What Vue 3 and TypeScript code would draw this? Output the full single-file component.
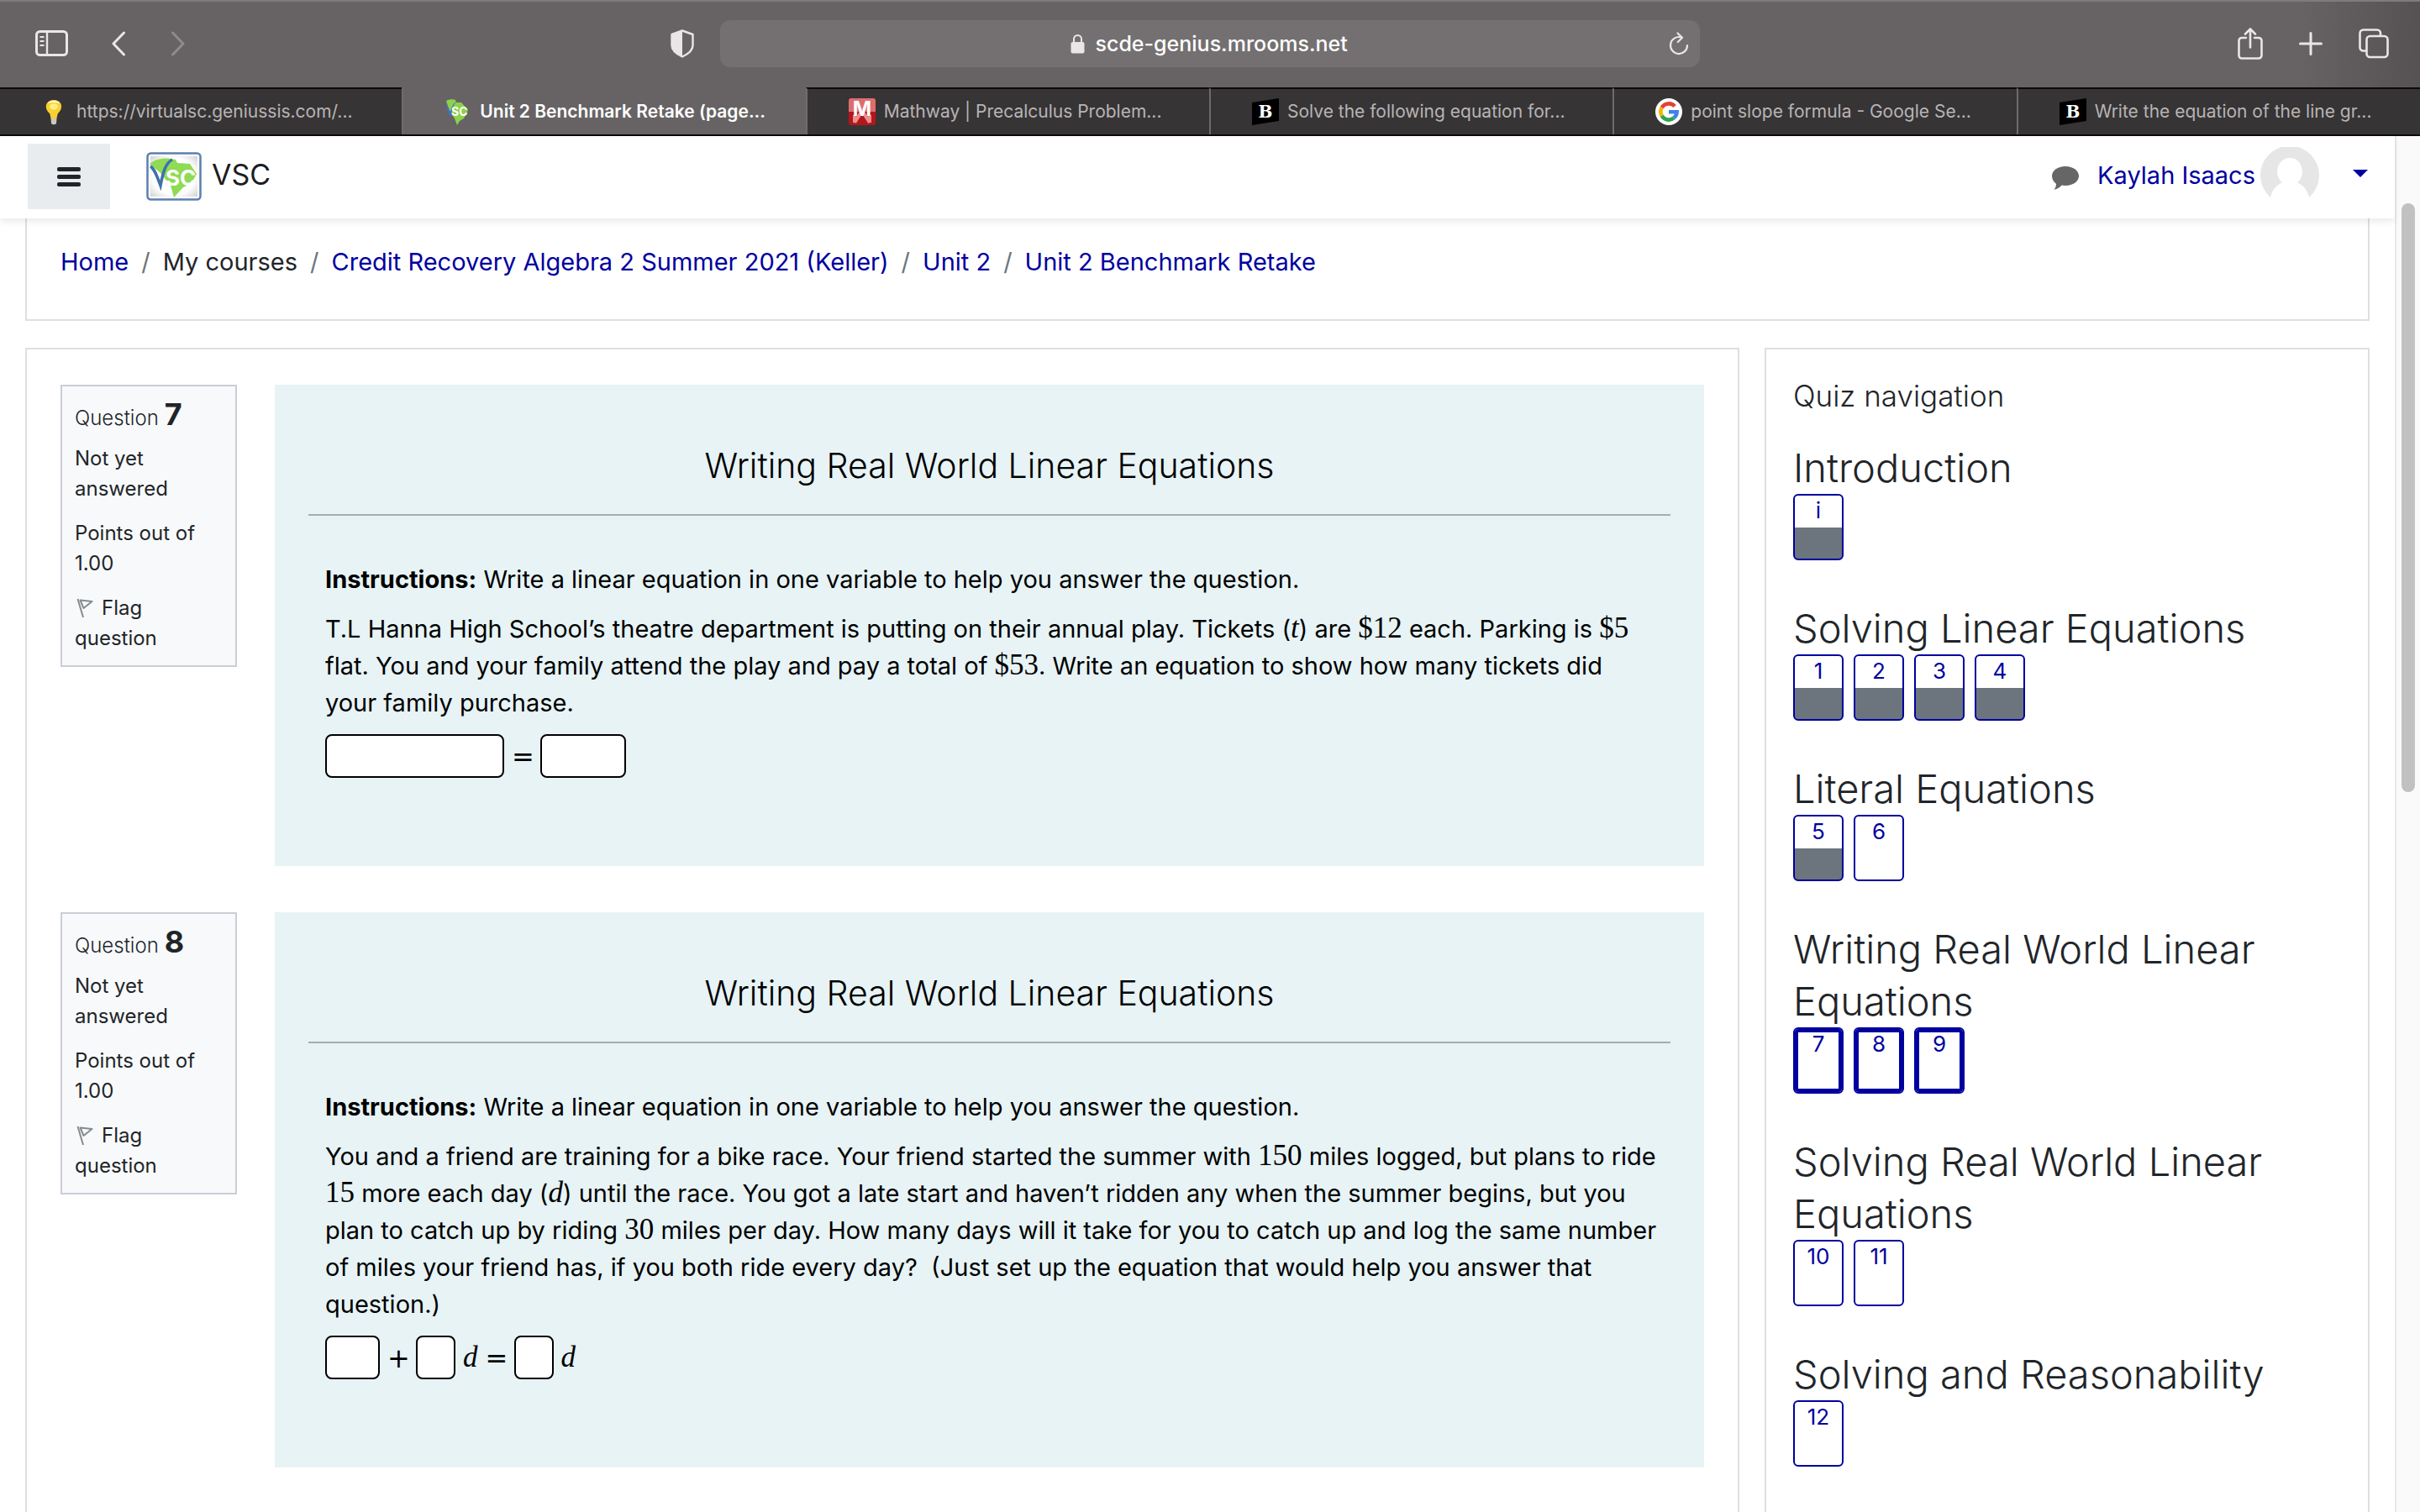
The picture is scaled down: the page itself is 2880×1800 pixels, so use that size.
<script setup lang="ts">
interface Tab { icon: 'bulb' | 'vsc' | 'mathway' | 'brainly' | 'google'; title: string; active?: boolean }
interface Part { kind: 'plain' | 'num' | 'var'; value: string }
interface Token { kind: 'field' | 'op' | 'var'; value: string; width?: number }
interface Question { number: number; body: Part[]; answer: Token[] }
interface Section { title: string; items: { label: string; state: 'saved' | 'open' | 'current' }[] }

const tabs: Tab[] = [
  { icon: 'bulb', title: 'https://virtualsc.geniussis.com/...' },
  { icon: 'vsc', title: 'Unit 2 Benchmark Retake (page...', active: true },
  { icon: 'mathway', title: 'Mathway | Precalculus Problem...' },
  { icon: 'brainly', title: 'Solve the following equation for...' },
  { icon: 'google', title: 'point slope formula - Google Se...' },
  { icon: 'brainly', title: 'Write the equation of the line gr...' },
]

const crumbs = [
  { label: 'Home', link: true },
  { label: 'My courses', link: false },
  { label: 'Credit Recovery Algebra 2 Summer 2021 (Keller)', link: true },
  { label: 'Unit 2', link: true },
  { label: 'Unit 2 Benchmark Retake', link: true },
]

const questions: Question[] = [
  {
    number: 7,
    body: [
      { kind: 'plain', value: 'T.L Hanna High School’s theatre department is putting on their annual play. Tickets (' },
      { kind: 'var', value: 't' },
      { kind: 'plain', value: ') are ' },
      { kind: 'num', value: '$12' },
      { kind: 'plain', value: ' each. Parking is ' },
      { kind: 'num', value: '$5' },
      { kind: 'plain', value: ' flat. You and your family attend the play and pay a total of ' },
      { kind: 'num', value: '$53' },
      { kind: 'plain', value: '. Write an equation to show how many tickets did your family purchase.' },
    ],
    answer: [
      { kind: 'field', value: '', width: 213 },
      { kind: 'op', value: '=' },
      { kind: 'field', value: '', width: 102 },
    ],
  },
  {
    number: 8,
    body: [
      { kind: 'plain', value: 'You and a friend are training for a bike race. Your friend started the summer with ' },
      { kind: 'num', value: '150' },
      { kind: 'plain', value: ' miles logged, but plans to ride ' },
      { kind: 'num', value: '15' },
      { kind: 'plain', value: ' more each day (' },
      { kind: 'var', value: 'd' },
      { kind: 'plain', value: ') until the race. You got a late start and haven’t ridden any when the summer begins, but you plan to catch up by riding ' },
      { kind: 'num', value: '30' },
      { kind: 'plain', value: ' miles per day. How many days will it take for you to catch up and log the same number of miles your friend has, if you both ride every day?\u00a0 (Just set up the equation that would help you answer that question.)' },
    ],
    answer: [
      { kind: 'field', value: '', width: 65 },
      { kind: 'op', value: '+' },
      { kind: 'field', value: '', width: 47 },
      { kind: 'var', value: 'd' },
      { kind: 'op', value: '=' },
      { kind: 'field', value: '', width: 47 },
      { kind: 'var', value: 'd' },
    ],
  },
]

const make = (labels: string[], state: 'saved' | 'open' | 'current') => labels.map((label) => ({ label, state }))
const sections: Section[] = [
  { title: 'Introduction', items: make(['i'], 'saved') },
  { title: 'Solving Linear Equations', items: make(['1', '2', '3', '4'], 'saved') },
  { title: 'Literal Equations', items: [...make(['5'], 'saved'), ...make(['6'], 'open')] },
  { title: 'Writing Real World Linear Equations', items: make(['7', '8', '9'], 'current') },
  { title: 'Solving Real World Linear Equations', items: make(['10', '11'], 'open') },
  { title: 'Solving and Reasonability', items: make(['12'], 'open') },
]
</script>

<template>
  <div class="window">
    <header class="toolbar">
      <div class="tools">
        <button class="tool" aria-label="Show sidebar">
          <svg width="40" height="32" viewBox="0 0 40 32" fill="none" stroke="currentColor" stroke-width="3">
            <rect x="1.5" y="1.5" width="36" height="28" rx="4" />
            <path d="M14 2v27" stroke-width="2.4" />
            <path d="M5.5 8h5M5.5 13h5M5.5 18h5" stroke-width="2" />
          </svg>
        </button>
        <button class="tool back" aria-label="Back">
          <svg width="18" height="30" viewBox="0 0 18 30" fill="none" stroke="currentColor" stroke-width="3" stroke-linecap="round" stroke-linejoin="round"><path d="M15.500 2 3 15l12.500 13" /></svg>
        </button>
        <button class="tool forward" aria-label="Forward">
          <svg width="18" height="30" viewBox="0 0 18 30" fill="none" stroke="currentColor" stroke-width="3" stroke-linecap="round" stroke-linejoin="round"><path d="M2.500 2 15 15 2.500 28" /></svg>
        </button>
        <button class="tool shield" aria-label="Privacy report">
          <svg width="28" height="34" viewBox="0 0 28 34"><path d="M14 1.500 26.500 6v13c0 6-5 10-12.500 13.500C6.500 29 1.500 25 1.500 19V6z" fill="none" stroke="currentColor" stroke-width="2.400" stroke-linejoin="round" /><path d="M14 1.500V32.500C6.500 29 1.500 25 1.500 19V6z" fill="currentColor" /></svg>
        </button>
      </div>
      <form class="address" @submit.prevent>
        <svg class="lock" width="17" height="24" viewBox="0 0 17 24"><rect x="0.500" y="10" width="16" height="13.500" rx="2" fill="currentColor" /><path d="M4 11V6.500a4.500 4.500 0 0 1 9 0V11" fill="none" stroke="currentColor" stroke-width="2" /></svg>
        <input class="url" type="text" value="scde-genius.mrooms.net" aria-label="Address" />
        <button class="tool reload" type="button" aria-label="Reload">
          <svg width="24" height="28" viewBox="0 0 24 28" fill="none" stroke="currentColor" stroke-width="2.200" stroke-linecap="round" stroke-linejoin="round"><path d="M15 6.500A10 10 0 1 0 22 16" /><path d="M10.500 1.500 16 6.800 10.800 12" /></svg>
        </button>
      </form>
      <div class="tools end">
        <button class="tool" aria-label="Share">
          <svg width="30" height="38" viewBox="0 0 30 38" fill="none" stroke="currentColor" stroke-width="2.600" stroke-linecap="round" stroke-linejoin="round"><path d="M10 12H5a3.500 3.500 0 0 0-3.500 3.500V33A3.500 3.500 0 0 0 5 36.500h20a3.500 3.500 0 0 0 3.500-3.500V15.500A3.500 3.500 0 0 0 25 12h-5" /><path d="M15 23.500V1.500M9 7.500l6-6 6 6" /></svg>
        </button>
        <button class="tool" aria-label="New tab">
          <svg width="28" height="28" viewBox="0 0 28 28" fill="none" stroke="currentColor" stroke-width="3" stroke-linecap="round"><path d="M14 1.500v25M1.500 14h25" /></svg>
        </button>
        <button class="tool" aria-label="Tab overview">
          <svg width="36" height="36" viewBox="0 0 36 36" fill="none" stroke="currentColor" stroke-width="2.600" stroke-linejoin="round"><rect x="9.500" y="9" width="25" height="25" rx="4" /><path d="M9 26.500H5.500A4 4 0 0 1 1.500 22.500V5.500a4 4 0 0 1 4-4H22a4 4 0 0 1 4 4V9" /></svg>
        </button>
      </div>
    </header>

    <nav class="tabs" aria-label="Tabs">
      <button v-for="(tab, i) in tabs" :key="i" class="tab" :class="{ active: tab.active }">
        <svg v-if="tab.icon === 'bulb'" class="favicon" viewBox="0 0 32 32"><path d="M10 18C3 12 5 2 15 2s12 10 5 16c-1 2-1 4-1.500 6h-7c-.500-2-.500-4-1.500-6z" fill="#f9cf35" /><path d="M10 10c0-5 10-5 10 0-1 5-9 5-10 0z" fill="#fdf07a" /><path d="M8 6c2-4 12-4 14 0-4-1.500-10-1.500-14 0z" fill="#fffbe6" /><path d="M11.500 24h7l-.500 6c-1.500 1.800-4.500 1.800-6 0z" fill="#c9c7c2" /></svg>
        <svg v-else-if="tab.icon === 'vsc'" class="favicon" viewBox="0 0 32 32"><path d="M2 3c4-2 8-2 11-1l1 3 6 0 8 9-5 10-5 3-3 5-3-8L5 13z" fill="#8fd14b" /><path d="M2 6c1 6 2 12 6 17 0-7 2-13 6-20-4 4-6 8-7 13C5 12 4 8 2 6z" fill="#3f74b8" /><text x="8" y="21" font-family="Inter, sans-serif" font-weight="700" font-size="14" fill="#fff">SC</text></svg>
        <svg v-else-if="tab.icon === 'mathway'" class="favicon" viewBox="0 0 32 32"><rect width="32" height="32" rx="3" fill="#b5161b" /><path d="M0 3a3 3 0 0 1 3-3h26a3 3 0 0 1 3 3v13H0z" fill="#dd6e70" /><path d="M7 29 16 15l9 14M7 20v9M25 20v9" fill="none" stroke="#eb8f90" stroke-width="4" /><text x="16" y="21" text-anchor="middle" font-family="Inter, sans-serif" font-weight="700" font-size="24" fill="#fff">M</text></svg>
        <svg v-else-if="tab.icon === 'brainly'" class="favicon" viewBox="0 0 32 32"><path d="M0 5 32 0v27L0 32z" fill="#000" /><text x="16" y="23" text-anchor="middle" font-family="'DejaVu Serif', serif" font-weight="700" font-size="20" fill="#fff">B</text></svg>
        <svg v-else class="favicon" viewBox="0 0 32 32"><circle cx="16" cy="16" r="16" fill="#fff" /><g fill="none" stroke-width="4.600"><path d="M23.100 9.500A9.600 9.600 0 0 0 7.700 11.200" stroke="#e34133" /><path d="M7.700 11.200a9.600 9.600 0 0 0 0 9.600" stroke="#f3b605" /><path d="M7.700 20.800a9.600 9.600 0 0 0 14.500 2.500" stroke="#32a350" /><path d="M22.200 23.300A9.600 9.600 0 0 0 25.600 16.200H16" stroke="#4081ec" /></g></svg>
        <span class="title">{{ tab.title }}</span>
      </button>
    </nav>

    <div class="viewport">
      <div class="page">
        <header class="site">
          <button class="menu" aria-label="Side panel"><i></i><i></i><i></i></button>
          <a class="brand" href="#">
            <svg width="66" height="58" viewBox="0 0 66 58">
              <defs><radialGradient id="plate" r="0.750"><stop offset="0.600" stop-color="#fff" /><stop offset="1" stop-color="#c9c9c9" /></radialGradient></defs>
              <rect x="1.500" y="1.500" width="63" height="55" rx="4" fill="#fff" stroke="#5b80b0" stroke-width="2.500" />
              <rect x="5" y="5" width="56" height="48" fill="url(#plate)" />
              <path d="M4 14C12 7 24 6 35 9l2 4 15 1 8 12-6 11-10 5-11 12-4-14-12-15z" fill="#8fdb55" />
              <path d="M5 17c5 3 8 12 12 23C20 24 23 13 31 9" fill="none" stroke="#3f71ad" stroke-width="3.500" />
              <text x="23" y="40" font-family="Inter, sans-serif" font-weight="700" font-size="26" fill="#fff">SC</text>
            </svg>
            <span>VSC</span>
          </a>
          <div class="user">
            <button class="chat" aria-label="Messages">
              <svg width="32" height="28" viewBox="0 0 32 28"><path d="M16 0c9 0 16 5 16 11.500S25 23 16 23c-1.500 0-3-.100-4.300-.400C9.500 25 6.500 27 2.500 27.800c1.500-1.800 2.500-4 2.500-7C2 18.500 0 15.500 0 11.500 0 5 7 0 16 0z" fill="#666" /></svg>
            </button>
            <a class="name" href="#">Kaylah Isaacs</a>
            <svg class="avatar" width="70" height="70" viewBox="0 0 70 70"><path d="M12 60A35 35 0 1 1 58 60C56 50 50 45 44 42.500 55 33 50 13 35 13S15 33 26 42.500C20 45 14 50 12 60z" fill="#e6e6e6" /></svg>
            <button class="caret" aria-label="User menu"><svg width="18" height="9" viewBox="0 0 18 9"><path d="M0 0h18L9 9z" fill="#00009f" /></svg></button>
          </div>
        </header>

        <nav class="crumbs" aria-label="Breadcrumb">
          <template v-for="(crumb, i) in crumbs" :key="crumb.label">
            <span v-if="i" class="slash">/</span>
            <a v-if="crumb.link" href="#">{{ crumb.label }}</a>
            <span v-else>{{ crumb.label }}</span>
          </template>
        </nav>

        <div class="columns">
          <main class="panel quiz">
            <section v-for="q in questions" :key="q.number" class="question">
              <aside class="info">
                <h3><span>Question</span><b>{{ q.number }}</b></h3>
                <p>Not yet answered</p>
                <p>Points out of 1.00</p>
                <a class="flag" href="#"><svg width="20" height="24" viewBox="0 0 20 24" fill="none" stroke="#868b90" stroke-width="2" stroke-linejoin="round"><path d="M1.500 1 8 23M4.500 2.500l14 1.500L8.500 12z" /></svg>Flag question</a>
              </aside>
              <div class="prompt">
                <h4>Writing Real World Linear Equations</h4>
                <hr />
                <div class="content">
                  <p><b>Instructions:</b> Write a linear equation in one variable to help you answer the question.</p>
                  <p><template v-for="(part, i) in q.body" :key="i"><template v-if="part.kind === 'plain'">{{ part.value }}</template><span v-else :class="part.kind">{{ part.value }}</span></template></p>
                  <div class="answer">
                    <template v-for="(token, i) in q.answer" :key="i">
                      <input v-if="token.kind === 'field'" type="text" :aria-label="`Question ${q.number} blank`" :style="{ width: token.width + 'px' }" />
                      <span v-else :class="token.kind">{{ token.value }}</span>
                    </template>
                  </div>
                </div>
              </div>
            </section>
          </main>

          <aside class="panel navigation">
            <h2>Quiz navigation</h2>
            <section v-for="section in sections" :key="section.title">
              <h3>{{ section.title }}</h3>
              <div class="cells">
                <a v-for="item in section.items" :key="item.label" class="cell" :class="item.state" href="#">{{ item.label }}</a>
              </div>
            </section>
          </aside>
        </div>
      </div>
      <div class="track"><div class="thumb"></div></div>
    </div>
  </div>
</template>

<style>
body {
  margin: 0;
  background: #fff;
}
</style>

<style scoped>
* {
  box-sizing: border-box;
}
.window {
  display: flex;
  flex-direction: column;
  height: 100vh;
  overflow: hidden;
  font-family: Inter, 'Liberation Sans', sans-serif;
  font-size: 29px;
  line-height: 44px;
  color: #212529;
}
button {
  padding: 0;
  border: 0;
  background: none;
  font: inherit;
  color: inherit;
}
svg {
  display: block;
  flex: none;
}
a {
  color: #00009f;
  text-decoration: none;
}
h2, h3, h4, p {
  margin: 0;
}

/* Browser toolbar */
.toolbar {
  display: grid;
  grid-template-columns: 1fr 40.5% 1fr;
  align-items: center;
  flex: none;
  height: 104px;
  padding-bottom: 2px;
  border-top: 2px solid #7f7b7d;
  background: linear-gradient(90deg, #676364 0, #676364 95%, #565253 100%);
  color: #e9e6e7;
}
.tools {
  display: flex;
  align-items: center;
  padding: 0 31px 0 42px;
}
.tools.end {
  justify-content: flex-end;
  gap: 43px;
  padding: 0 37px 0 0;
}
.back {
  margin-left: 50px;
}
.forward {
  margin-left: 53px;
  color: #8f8b8d;
}
.shield {
  margin-left: auto;
}
.address {
  display: grid;
  grid-template-columns: 1fr auto auto 1fr;
  align-items: center;
  column-gap: 12px;
  height: 56px;
  border-radius: 12px;
  background: #747071;
}
.lock {
  grid-column: 2;
}
.url {
  width: 302px;
  height: 40px;
  padding: 0;
  border: 0;
  outline: 0;
  background: none;
  font: 500 25px/40px Inter, 'Liberation Sans', sans-serif;
  color: #fff;
}
.reload {
  justify-self: end;
  margin-right: 13px;
}
.tabs {
  display: flex;
  flex: none;
  height: 58px;
  border-bottom: 2px solid #0b0a0a;
  background: #676364;
}
.tab {
  display: flex;
  flex: 1;
  align-items: center;
  gap: 10px;
  min-width: 0;
  padding-left: 49px;
  border-top: 2px solid #0b0a0a;
  background: #373435;
  font-size: 21px;
  color: #b7b4b5;
}
.tab + .tab {
  border-left: 2px solid #6f6b6c;
}
.tab.active {
  border-top-color: #676364;
  background: #676364;
  font-weight: 600;
  color: #fff;
}
.favicon {
  width: 32px;
  height: 32px;
  overflow: visible;
}
.title {
  overflow: hidden;
  white-space: nowrap;
}

/* Page */
.viewport {
  display: flex;
  flex: 1;
  min-height: 0;
}
.page {
  display: flex;
  flex: 1;
  flex-direction: column;
  min-width: 0;
}
.track {
  flex: none;
  width: 30px;
  padding: 80px 6px 0;
  border-left: 2px solid #e8e8e8;
  background: #fafafa;
}
.thumb {
  width: 16px;
  height: 45%;
  border-radius: 8px;
  background: #c1c1c1;
}
.site {
  display: flex;
  align-items: center;
  flex: none;
  z-index: 1;
  height: 98px;
  padding: 0 32px 2px 33px;
  background: #fff;
  box-shadow: 0 4px 8px rgba(0, 0, 0, 0.08);
}
.menu {
  display: flex;
  flex-direction: column;
  align-items: center;
  justify-content: center;
  gap: 4px;
  width: 98px;
  height: 78px;
  background: #e9ecef;
}
.menu i {
  width: 28px;
  height: 5px;
  border-radius: 2px;
  background: #212529;
}
.brand {
  display: flex;
  align-items: center;
  gap: 12px;
  margin-left: 43px;
  font-size: 34px;
  color: #1b1d1f;
}
.brand span {
  padding-bottom: 4px;
}
.user {
  display: flex;
  align-items: center;
  margin-left: auto;
}
.chat {
  padding-top: 4px;
}
.name {
  margin: 0 6px 0 22px;
  padding-bottom: 2px;
}
.caret {
  margin-left: 40px;
  padding-bottom: 8px;
}
.crumbs {
  display: flex;
  flex: none;
  gap: 15px;
  height: 122px;
  margin: 0 30px;
  padding: 30px 40px 0;
  border: 2px solid #dedfe0;
  border-top: 0;
}
.slash {
  color: #6c757d;
}
.columns {
  display: flex;
  flex: 1;
  gap: 30px;
  min-height: 0;
  padding: 32px 30px 0;
}
.panel {
  border: 2px solid #dedfe0;
  border-bottom: 0;
}
.quiz {
  display: flex;
  flex: 1;
  flex-direction: column;
  gap: 55px;
  min-width: 0;
  padding: 42px 40px 0;
}
.question {
  display: flex;
  align-items: flex-start;
  gap: 45px;
}
.info {
  flex: none;
  width: 210px;
  padding: 12px 15px 14px;
  border: 2px solid #caced6;
  background: #f8f9fb;
  font-size: 24px;
  line-height: 36px;
}
.info h3 {
  display: flex;
  align-items: baseline;
  gap: 7px;
  height: 43px;
  margin-bottom: 13px;
  font-size: 24px;
  font-weight: 300;
  line-height: 43px;
}
.info h3 b {
  font-size: 36px;
  font-weight: 700;
}
.info p {
  margin-bottom: 17px;
}
.flag {
  display: block;
  color: #212529;
}
.flag svg {
  display: inline-block;
  margin: 0 10px 0 2px;
  vertical-align: -4px;
}
.prompt {
  flex: 1;
  min-width: 0;
  padding: 72px 40px 105px;
  background: #e7f3f5;
  color: #000;
}
.prompt h4 {
  font-size: 41px;
  font-weight: 300;
  line-height: 49px;
  text-align: center;
}
hr {
  height: 2px;
  margin: 33px 0 54px;
  border: 0;
  background: #a5adaf;
}
.content {
  padding: 0 14px 0 20px;
}
.content p {
  margin-bottom: 15px;
}
.num, .var {
  font-family: 'Liberation Serif', serif;
  font-size: 35px;
  line-height: 38px;
}
.var {
  font-style: italic;
}
.answer {
  display: flex;
  align-items: center;
  gap: 9px;
}
.answer input {
  height: 52px;
  padding: 0 8px;
  border: 2px solid #000;
  border-radius: 8px;
  background: #fff;
  font: inherit;
}
.op {
  width: 25px;
  padding-top: 2px;
  font-family: 'DejaVu Sans', sans-serif;
  font-size: 32px;
  text-align: center;
}

/* Quiz navigation */
.navigation {
  flex: none;
  width: 720px;
  padding: 34px 32px 0;
}
.navigation h2 {
  margin-bottom: 34px;
  font-size: 35px;
  font-weight: 300;
  line-height: 42px;
}
.navigation h3 {
  font-size: 47px;
  font-weight: 300;
  line-height: 62px;
}
.cells {
  display: flex;
  gap: 12px;
  margin-bottom: 50px;
}
.cell {
  width: 60px;
  height: 79px;
  border: 2px solid #00009f;
  border-radius: 6px;
  font-size: 26px;
  line-height: 35px;
  text-align: center;
}
.saved {
  background: linear-gradient(#fff 38px, #6c757d 38px);
}
.current {
  box-shadow: inset 0 0 0 4px #00009f;
}
</style>
